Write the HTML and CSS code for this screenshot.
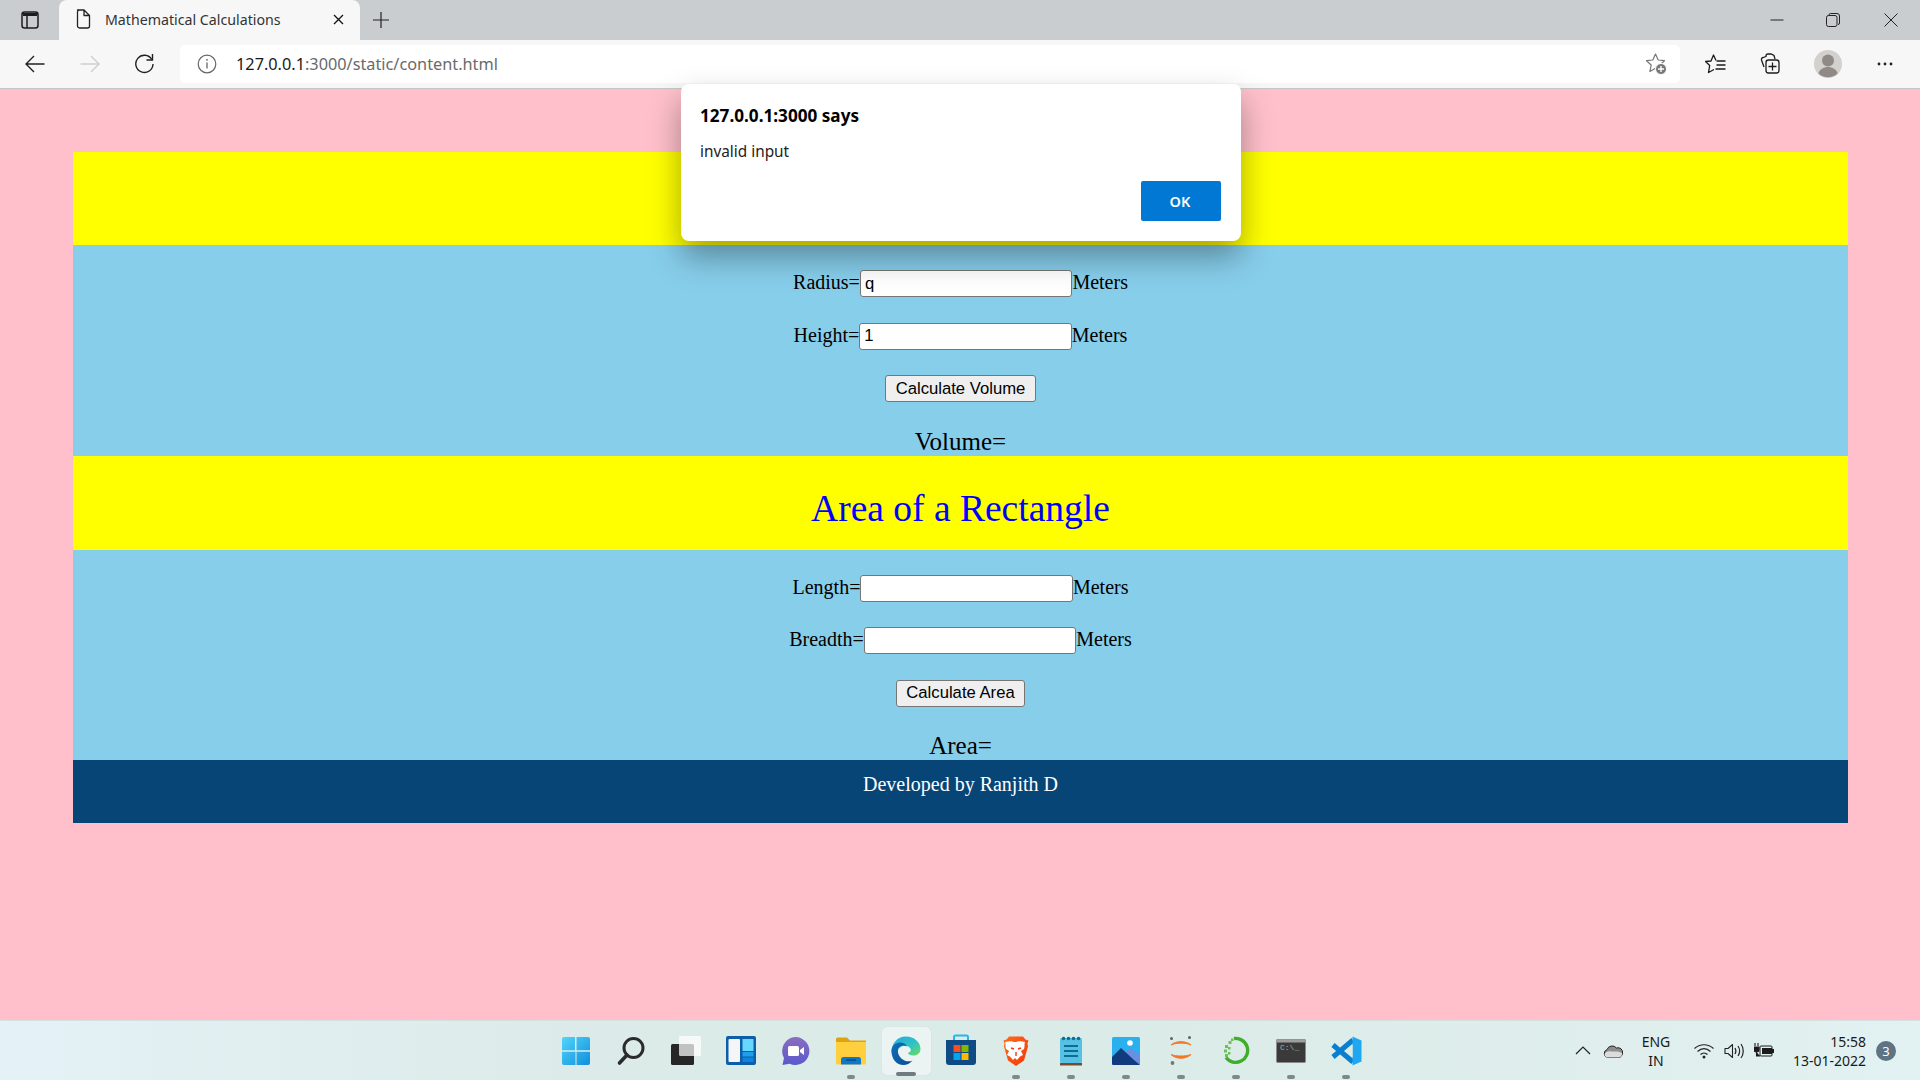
FILE: index.html
```html
<!DOCTYPE html>
<html lang="en">
<head>
<meta charset="utf-8">
<title>Mathematical Calculations</title>
<link rel="stylesheet" href="styles.css">
</head>
<body>
<div class="window">
  <header class="tabstrip">
    <div class="tab-actions">
      <svg width="20" height="20" viewBox="0 0 20 20"><rect x="2" y="2" width="16" height="16" rx="2.5" fill="none" stroke="#1c1c1c" stroke-width="1.5"/><path d="M3 3h14v3H3z" fill="#1c1c1c"/><path d="M7 6v12" stroke="#1c1c1c" stroke-width="1.5"/></svg>
    </div>
    <div class="tab">
      <svg class="tab-doc" width="16" height="20" viewBox="0 0 16 20"><path d="M2.500 1h6.500l5.500 5.500V17a2 2 0 0 1-2 2h-8a2 2 0 0 1-2-2V3a2 2 0 0 1 2-2zM9 1v5.500h5.500" fill="none" stroke="#222" stroke-width="1.300" stroke-linejoin="round"/></svg>
      <span class="tab-title">Mathematical Calculations</span>
      <svg class="tab-close" width="11" height="11" viewBox="0 0 11 11"><path d="M1 1l9 9M10 1l-9 9" stroke="#111" stroke-width="1.300"/></svg>
    </div>
    <div class="new-tab">
      <svg width="18" height="18" viewBox="0 0 18 18"><path d="M9 1v16M1 9h16" stroke="#222" stroke-width="1.200"/></svg>
    </div>
    <div class="win-controls">
      <div class="win-btn win-min"><svg width="14" height="14" viewBox="0 0 14 14"><path d="M0.500 7h13" stroke="#222" stroke-width="1"/></svg></div>
      <div class="win-btn"><svg width="14" height="14" viewBox="0 0 14 14"><rect x="0.500" y="2.500" width="10.500" height="11" rx="2" fill="none" stroke="#222"/><path d="M3 2.500V2a1.500 1.500 0 0 1 1.500-1.500h6.500a2.500 2.500 0 0 1 2.500 2.500v7a1.500 1.500 0 0 1-1.500 1.500" fill="none" stroke="#222"/></svg></div>
      <div class="win-btn"><svg width="14" height="14" viewBox="0 0 14 14"><path d="M0.500 0.500l13 13M13.500 0.500l-13 13" stroke="#222" stroke-width="1"/></svg></div>
    </div>
  </header>

  <nav class="toolbar">
    <div class="nav-btn"><svg width="20" height="20" viewBox="0 0 20 20"><path d="M19.500 10H1M9 2l-8 8 8 8" fill="none" stroke="#222" stroke-width="1.400"/></svg></div>
    <div class="nav-btn"><svg width="20" height="20" viewBox="0 0 20 20"><path d="M0.500 10H19M11 2l8 8-8 8" fill="none" stroke="#cfcfcf" stroke-width="1.400"/></svg></div>
    <div class="nav-btn"><svg width="21" height="21" viewBox="0 0 21 21"><path d="M17.800 6.500A8.600 8.600 0 1 0 19 11" fill="none" stroke="#222" stroke-width="1.400"/><path d="M18.500 1v6h-6" fill="none" stroke="#222" stroke-width="1.400"/></svg></div>
    <div class="address">
      <svg class="addr-info" width="20" height="20" viewBox="0 0 20 20"><circle cx="10" cy="10" r="8.800" fill="none" stroke="#666" stroke-width="1.200"/><path d="M10 8.500v6" stroke="#666" stroke-width="1.300"/><circle cx="10" cy="5.800" r="0.900" fill="#666"/></svg>
      <span class="url"><span class="url-host">127.0.0.1</span>:3000/static/content.html</span>
      <svg class="addr-star" width="22" height="22" viewBox="0 0 22 22"><path d="M10.500 1l2.700 6 6.300 0.700-4.700 4.300 1.300 6.500-5.600-3.300-5.600 3.300 1.300-6.500L1.500 7.700 7.800 7z" fill="none" stroke="#777" stroke-width="1.200" stroke-linejoin="round"/><circle cx="16" cy="16" r="5.500" fill="#777" stroke="#fff" stroke-width="1"/><path d="M16 13v6M13 16h6" stroke="#fff" stroke-width="1.400"/></svg>
    </div>
    <div class="tools">
      <div class="tool-btn"><svg width="21" height="20" viewBox="0 0 21 20"><path d="M11 6.500L8.500 1 6 7l-5.500 0.500L4.700 11.500 3.500 18.500 9 15.500" fill="none" stroke="#1c1c1c" stroke-width="1.300" stroke-linejoin="round"/><path d="M11.500 7h9M11.500 11h9M10.500 15h10" fill="none" stroke="#1c1c1c" stroke-width="1.300"/></svg></div>
      <div class="tool-btn"><svg width="21" height="21" viewBox="0 0 21 21"><path d="M7 3.500l-3 1a2 2 0 0 0-1.500 2.500L5 14M7 4V3a2 2 0 0 1 2-2h3l3 1.500 1 3.500" fill="none" stroke="#1c1c1c" stroke-width="1.300"/><rect x="7" y="7" width="13" height="13" rx="2.500" fill="#f7f7f7" stroke="#1c1c1c" stroke-width="1.300"/><path d="M13.500 9.500v8M9.500 13.500h8" stroke="#1c1c1c" stroke-width="1.300"/></svg></div>
      <div class="tool-btn"><svg width="28" height="28" viewBox="0 0 28 28"><circle cx="14" cy="14" r="14" fill="#d3d1cd"/><circle cx="14" cy="10.500" r="6" fill="#8f8a86"/><path d="M4.500 23.500c1-4 5-6.500 9.500-6.500s8.500 2.500 9.500 6.500a14 14 0 0 1-19 0z" fill="#8f8a86"/></svg></div>
      <div class="tool-btn"><svg width="16" height="4" viewBox="0 0 16 4"><circle cx="2" cy="2" r="1.400" fill="#222"/><circle cx="8" cy="2" r="1.400" fill="#222"/><circle cx="14" cy="2" r="1.400" fill="#222"/></svg></div>
    </div>
  </nav>

  <main class="page">
    <div class="sheet">
      <section class="banner"><h1 class="banner-title">Volume of a Cylinder</h1></section>
      <section class="calc">
        <div class="calc-row">Radius=<input class="field" type="text" value="q">Meters</div>
        <div class="calc-row">Height=<input class="field" type="text" value="1">Meters</div>
        <div class="calc-row"><button class="calc-btn" type="button">Calculate Volume</button></div>
        <h3 class="result">Volume=</h3>
      </section>
      <section class="banner"><h1 class="banner-title">Area of a Rectangle</h1></section>
      <section class="calc">
        <div class="calc-row">Length=<input class="field" type="text">Meters</div>
        <div class="calc-row">Breadth=<input class="field" type="text">Meters</div>
        <div class="calc-row"><button class="calc-btn" type="button">Calculate Area</button></div>
        <h3 class="result">Area=</h3>
      </section>
      <footer class="sheet-footer">Developed by Ranjith D</footer>
    </div>
    <div class="alert" role="alertdialog">
      <div class="alert-title">127.0.0.1:3000 says</div>
      <div class="alert-msg">invalid input</div>
      <div class="alert-actions"><button class="alert-ok" type="button">OK</button></div>
    </div>
  </main>

  <footer class="taskbar">
    <div class="tb-spacer"></div>
    <div class="tb-apps">
      <div class="app"><svg width="30" height="30" viewBox="0 0 30 30"><defs><linearGradient id="w1" x1="0" y1="0" x2="1" y2="1"><stop offset="0" stop-color="#52d5fb"/><stop offset="1" stop-color="#0d8fdc"/></linearGradient></defs><path d="M1 3a2 2 0 0 1 2-2h11v13.300H1zM15.500 1H27a2 2 0 0 1 2 2v11.300H15.500zM1 15.700h13.500V29H3a2 2 0 0 1-2-2zM15.500 15.700H29V27a2 2 0 0 1-2 2H15.500z" fill="url(#w1)"/></svg></div>
      <div class="app"><svg width="30" height="30" viewBox="0 0 30 30"><circle cx="17.500" cy="12" r="9.500" fill="none" stroke="#2b2b2b" stroke-width="3"/><path d="M11 19l-7.500 8" stroke="#2b2b2b" stroke-width="3.600" stroke-linecap="round"/></svg></div>
      <div class="app"><svg width="30" height="30" viewBox="0 0 30 30"><rect x="0" y="8" width="23" height="21" rx="1.500" fill="#262626"/><rect x="8" y="0" width="22" height="20" rx="1.500" fill="#fff" fill-opacity=".72"/></svg></div>
      <div class="app"><svg width="30" height="30" viewBox="0 0 30 30"><rect x="0" y="0" width="30" height="29" rx="2" fill="#0d5da8"/><rect x="2.500" y="3" width="11.500" height="23" rx="1" fill="#f3f5f7"/><rect x="16.500" y="3" width="11" height="12" fill="#67d8fd"/><rect x="16.500" y="16" width="11" height="4.500" fill="#1d9ff0"/><rect x="16.500" y="21.500" width="11" height="4.500" fill="#0f84dd"/></svg></div>
      <div class="app"><svg width="30" height="30" viewBox="0 0 30 30"><defs><linearGradient id="t1" x1="0" y1="0" x2="0" y2="1"><stop offset="0" stop-color="#8a6dc0"/><stop offset="1" stop-color="#5a59cc"/></linearGradient></defs><path d="M14.500 1a14 14 0 1 1-6 26.700L1.500 29l1.500-7A14 14 0 0 1 14.500 1z" fill="url(#t1)"/><rect x="7" y="10" width="11" height="10" rx="1.500" fill="#fff"/><path d="M19 14l4-3v8l-4-3z" fill="#fff"/></svg></div>
      <div class="app"><svg width="30" height="30" viewBox="0 0 30 30"><path d="M0 3a1.500 1.500 0 0 1 1.500-1.500H11l3 3h16V10H0z" fill="#dfa30e"/><path d="M0 6h30v21a1.500 1.500 0 0 1-1.500 1.500h-27A1.500 1.500 0 0 1 0 27z" fill="#ffcf3d"/><path d="M5 23.500a2.500 2.500 0 0 1 2.500-2.500H22.500a2.500 2.500 0 0 1 2.500 2.500v5H5z" fill="#0f78c8"/><path d="M10 24h10" stroke="#083e70" stroke-width="1.200"/></svg><i class="pip"></i></div>
      <div class="app app-active"><svg width="30" height="30" viewBox="0 0 30 30"><defs><linearGradient id="e1" x1="0" y1="0" x2="1" y2="1"><stop offset="0" stop-color="#2aa6dc"/><stop offset=".55" stop-color="#2dc3c8"/><stop offset="1" stop-color="#6fdc5a"/></linearGradient><linearGradient id="e2" x1="0" y1="0" x2="1" y2="1"><stop offset="0" stop-color="#0c6fb8"/><stop offset="1" stop-color="#0a4c94"/></linearGradient></defs><path d="M15 0.500c8 0 14.500 5.500 14.500 12.500 0 4-3 6.500-7 6.500-3 0-5.500-1-5.500-2.500 3-1 3.500-3 2-5-2-2.500-7-3-10-0.500C6 13.500 3 16 0.500 17 0 8 6 0.500 15 0.500z" fill="url(#e1)"/><path d="M0.500 15c0-5 4-8.500 8.500-8.500 3 0 6 1.500 7 4-3-2-7-1-8.500 2-2 4.500 1.500 10 6 12 3 1.300 6 1 8 0-2.500 3-6 4.500-9 4.500-7 0-12-6-12-14z" fill="url(#e2)"/></svg><i class="pip pip-wide"></i></div>
      <div class="app"><svg width="30" height="34" viewBox="0 0 30 34"><path d="M8 6V3a1.500 1.500 0 0 1 1.500-1.500h11A1.500 1.500 0 0 1 22 3v3" fill="none" stroke="#25b6ee" stroke-width="2"/><path d="M0 6h30v22a3 3 0 0 1-3 3H3a3 3 0 0 1-3-3z" fill="#0f4a85"/><rect x="7.500" y="11" width="7" height="7" fill="#f25022"/><rect x="15.500" y="11" width="7" height="7" fill="#7fba00"/><rect x="7.500" y="19" width="7" height="7" fill="#00a4ef"/><rect x="15.500" y="19" width="7" height="7" fill="#ffb900"/></svg></div>
      <div class="app"><svg width="26" height="30" viewBox="0 0 26 30"><defs><linearGradient id="b1" x1="0" y1="0" x2="1" y2="1"><stop offset="0" stop-color="#ff6b1a"/><stop offset="1" stop-color="#f0380f"/></linearGradient></defs><path d="M6 0.500h14l2.500 3 3 1-1 3 0.500 3-4 14L13 30l-8-5.500-4-14 0.500-3-1-3 3-1z" fill="url(#b1)"/><path d="M13 6c2-1 6-1 9 0-1 3 0 4-1 7l-3 2 2 4-3 1.500-3 3.500-2-2-2 2-3-3.500-3-1.500 2-4-3-2c-1-3 0-4-1-7 3-1 7-1 9 0z" fill="#fff"/><path d="M8 12l3 1M18 12l-3 1M13 16v4" stroke="#f0380f" stroke-width="1.400"/></svg><i class="pip"></i></div>
      <div class="app"><svg width="24" height="30" viewBox="0 0 24 30"><rect x="1" y="2" width="22" height="25" rx="1.500" fill="#56c1e4"/><path d="M1 27h22v2.500H1z" fill="#7c4a2a"/><circle cx="4.500" cy="2.500" r="1.800" fill="#0e6d93"/><circle cx="9.500" cy="2.500" r="1.800" fill="#0e6d93"/><circle cx="14.500" cy="2.500" r="1.800" fill="#0e6d93"/><circle cx="19.500" cy="2.500" r="1.800" fill="#0e6d93"/><path d="M5 10h14M5 15h14M5 20h14" stroke="#0e6d93" stroke-width="1.800"/></svg><i class="pip"></i></div>
      <div class="app"><svg width="30" height="30" viewBox="0 0 30 30"><rect x="1" y="1" width="28" height="28" rx="1.500" fill="#2ab0ef"/><circle cx="19" cy="7" r="2.800" fill="#fff"/><path d="M14 16l5-4 10 7v9H15z" fill="#6a8fe0"/><path d="M1 21l9-9 13 12 6 5H2.500A1.500 1.500 0 0 1 1 27.500z" fill="#123b7d"/></svg><i class="pip"></i></div>
      <div class="app"><svg width="24" height="30" viewBox="0 0 24 30"><path d="M2 9c5-4.500 15-4.500 20 0-5-2.500-15-2.500-20 0zM2 18.500c5 5 15 5 20 0-5 2-15 2-20 0z" fill="#f37726" stroke="#f37726" stroke-width="1"/><circle cx="2.500" cy="2.500" r="1.500" fill="#616161"/><circle cx="20.500" cy="1.500" r="1.500" fill="#616161"/><circle cx="3.500" cy="27" r="1.900" fill="#757575"/></svg><i class="pip"></i></div>
      <div class="app"><svg width="27" height="30" viewBox="0 0 27 30"><path d="M11 2.500a12 12 0 1 1-8 19" fill="none" stroke="#3fae2a" stroke-width="3.400"/><g fill="#6fc05d"><rect x="2" y="9" width="3" height="3"/><rect x="5.500" y="5" width="3" height="3"/><rect x="1" y="13.500" width="3" height="3"/><rect x="5" y="11" width="2.500" height="2.500"/><rect x="2" y="18" width="3" height="3"/><rect x="8" y="2.500" width="2.500" height="2.500"/><rect x="5" y="16" width="2.500" height="2.500"/></g></svg><i class="pip"></i></div>
      <div class="app"><svg width="30" height="24" viewBox="0 0 30 24"><rect x="0.500" y="0.500" width="29" height="23" rx="1" fill="#3a3a3a" stroke="#8a8a8a"/><rect x="0.500" y="0.500" width="29" height="3" fill="#9e9e9e"/><text class="term-text" x="4" y="11">C:\_</text></svg><i class="pip"></i></div>
      <div class="app"><svg width="31" height="30" viewBox="0 0 31 30"><path d="M22 4L2 21M2 9L22 26" fill="none" stroke="#0a7fd0" stroke-width="5"/><path d="M21.500 0.500L30.500 4.500v21l-9 4z" fill="#1fa8f1"/><path d="M21.500 9L21.500 21 14.500 15z" fill="#dcebe8"/></svg><i class="pip"></i></div>
    </div>
    <div class="tray">
      <svg class="tray-chev" width="16" height="9" viewBox="0 0 16 9"><path d="M1 8l7-7 7 7" fill="none" stroke="#222" stroke-width="1.200"/></svg>
      <svg class="tray-cloud" width="20" height="14" viewBox="0 0 20 14"><path d="M5 13.500a4 4 0 0 1-1-7.800A5.500 5.500 0 0 1 13.500 4 4.500 4.500 0 0 1 19.500 9c0 2.500-2 4.500-4 4.500z" fill="#8e8e8e" stroke="#222" stroke-width="1"/><path d="M1.500 10c2-3 5-3 7-2.500s5-1 10.500 1.500l0 1c0 2-2 3.500-4 3.500H5c-2 0-3.500-1.500-3.500-3.500z" fill="#dcdcdc"/></svg>
      <div class="tray-lang"><span>ENG</span><span>IN</span></div>
      <svg class="tray-wifi" width="20" height="16" viewBox="0 0 20 16"><path d="M0.500 5.500c5.500-5 13.500-5 19 0M3.500 8.500c4-3.500 9-3.500 13 0M6.500 11.500c2-2 5-2 7 0" fill="none" stroke="#222" stroke-width="1.200"/><circle cx="10" cy="14" r="1.500" fill="#222"/></svg>
      <svg class="tray-vol" width="20" height="16" viewBox="0 0 20 16"><path d="M1 5.500h3L8.500 1.500v13L4 10.500H1z" fill="none" stroke="#222" stroke-width="1.100" stroke-linejoin="round"/><path d="M11 5c1.200 2 1.200 4 0 6M14 3c2 3 2 7 0 10M17 1c3 4 3 10 0 14" fill="none" stroke="#222" stroke-width="1.200"/></svg>
      <svg class="tray-batt" width="20" height="16" viewBox="0 0 20 16"><rect x="6" y="3" width="12" height="10" rx="1" fill="none" stroke="#1b1b1b"/><rect x="8" y="5" width="10" height="6" fill="#1b1b1b"/><rect x="18" y="6" width="2" height="4" fill="#1b1b1b"/><path d="M1 0v3M4 0v3M0 4h5v2.500a2.500 2.500 0 0 1-5 0zM2.500 9v4h3.500" fill="#1b1b1b" stroke="#1b1b1b" stroke-width="1.100"/></svg>
      <div class="tray-clock"><span>15:58</span><span>13-01-2022</span></div>
      <div class="tray-badge">3</div>
    </div>
  </footer>
</div>
</body>
</html>
```

FILE: styles.css
```css
* { box-sizing: border-box; }
html, body { margin: 0; height: 100%; }
body { font-family: "Liberation Serif", "Times New Roman", serif; overflow: hidden; }

.window { display: flex; flex-direction: column; width: 1920px; height: 1080px; }

/* Tab strip */
.tabstrip { display: flex; align-items: flex-end; height: 40px; background: #cacdd0; flex: none; }
.tab-actions { display: flex; align-items: center; justify-content: center; width: 59px; height: 40px; }
.tab { display: flex; align-items: center; width: 301px; height: 40px; padding: 0 16px 2px; background: #f7f7f7; border-radius: 8px 8px 0 0; }
.tab-title { font: 14.2px "Noto Sans", "Open Sans", sans-serif; color: #333; margin-left: 14px; flex: 1; white-space: nowrap; }
.new-tab { display: flex; align-items: center; justify-content: center; width: 40px; height: 40px; margin-left: 1px; }
.win-controls { display: flex; margin-left: auto; height: 40px; }
.win-btn { display: flex; align-items: center; justify-content: center; width: 58px; height: 40px; }
.win-min { padding-left: 3px; }

/* Toolbar */
.toolbar { display: flex; align-items: center; height: 49px; padding: 0 7px 1px 7px; background: #f7f7f7; border-bottom: 1px solid #c6c6c6; flex: none; }
.nav-btn { display: flex; align-items: center; justify-content: center; width: 55px; height: 38px; }
.address { display: flex; align-items: center; height: 38px; flex: 1; margin-left: 8px; margin-right: 9px; padding: 0 13px 0 17px; background: #fff; border-radius: 5px; }
.url { font: 16.3px "Noto Sans", "Open Sans", sans-serif; color: #6a6a6a; margin-left: 19px; flex: 1; white-space: nowrap; }
.url-host { color: #1a1a1a; }
.tools { display: grid; grid-template-columns: 52px 57px 59px 56px; align-items: center; }
.tool-btn { display: flex; align-items: center; justify-content: center; height: 38px; }

/* Page */
.page { position: relative; flex: 1; min-height: 0; background: #ffc0cb; padding: 62.6px 72px 0 73px; }
.sheet { display: flex; flex-direction: column; }
.banner { background: #ff0; padding: 31px 0 19.8px; text-align: center; }
.banner-title { margin: 0; font-size: 37.5px; font-weight: 400; line-height: 43px; color: #00f; }
.calc { display: flex; flex-direction: column; gap: 25px; padding-top: 25px; background: #87ceeb; text-align: center; font-size: 20px; color: #000; }
.calc-row { height: 27.5px; line-height: 23px; }
.field { width: 212.5px; height: 27px; padding: 1px 4px; border: 1px solid #767676; border-radius: 3px; background: #fff; font: 16.67px "Liberation Sans", Arial, sans-serif; color: #000; vertical-align: baseline; }
.calc-btn { height: 27px; padding: 0 9.5px; border: 1px solid #767676; border-radius: 3px; background: #efefef; font: 16.67px "Liberation Sans", Arial, sans-serif; color: #000; }
.result { margin: 0; font-size: 25px; font-weight: 400; line-height: 28px; }
.sheet-footer { background: #084577; color: #fff; font-size: 20px; line-height: 23px; text-align: center; padding: 13px 0 27px; }

/* Alert */
.alert { position: absolute; top: -5px; left: 681px; width: 560px; height: 157px; padding: 21px 20px 20px 19px; display: flex; flex-direction: column; background: #fff; border-radius: 8px; box-shadow: 0 16px 32px rgba(0,0,0,.35); font-family: "Noto Sans", "Open Sans", sans-serif; color: #000; }
.alert-title { font-size: 17.15px; font-weight: 700; line-height: 22px; }
.alert-msg { font-size: 15.35px; line-height: 20px; margin-top: 14px; color: #222; }
.alert-actions { display: flex; justify-content: flex-end; margin-top: auto; }
.alert-ok { width: 80px; height: 40px; padding: 0 2px 0 0; border: 0; border-radius: 2px; background: #0078d4; color: #fff; font: 600 14.5px "Noto Sans", "Open Sans", sans-serif; }

/* Taskbar */
.taskbar { display: grid; grid-template-columns: 1fr auto 1fr; align-items: center; height: 60px; background: linear-gradient(90deg, #e4f1f6 0%, #dcebe9 30%, #dbebe7 60%, #e2f1f1 100%); border-top: 1px solid #d7dfdf; flex: none; }
.tb-apps { display: flex; padding-left: 2px; }
.app { position: relative; display: flex; align-items: center; justify-content: center; width: 55px; height: 48px; margin: 1px 0 0; }
.app-active { width: 49px; margin-left: 3px; margin-right: 3px; background: rgba(255,255,255,.45); border-radius: 5px; box-shadow: 0 0 1px rgba(0,0,0,.15); }
.pip { position: absolute; left: 50%; bottom: -4px; width: 8px; height: 4px; margin-left: -4px; border-radius: 2px; background: #7e8a8a; }
.pip-wide { bottom: -1px; width: 20px; margin-left: -10px; background: #6e7c80; }
.term-text { font: 8px "Liberation Mono", monospace; fill: #aaa; }

.tray { display: flex; align-items: center; justify-self: end; height: 59px; font-family: "Noto Sans", "Open Sans", sans-serif; font-size: 14px; color: #1a1a1a; }
.tray-chev { margin-right: 12px; }
.tray-cloud { margin-right: 14px; }
.tray-lang { display: flex; flex-direction: column; align-items: center; width: 38px; line-height: 19px; margin-right: 19px; }
.tray-wifi { margin-right: 10px; }
.tray-vol { margin-right: 10px; }
.tray-batt { margin-right: 20px; }
.tray-clock { display: flex; flex-direction: column; align-items: flex-end; width: 72px; line-height: 19px; margin-right: 10px; white-space: nowrap; }
.tray-badge { display: flex; align-items: center; justify-content: center; width: 20px; height: 20px; margin-right: 24px; border-radius: 50%; background: #5e7484; color: #fff; font-size: 13px; }
```
